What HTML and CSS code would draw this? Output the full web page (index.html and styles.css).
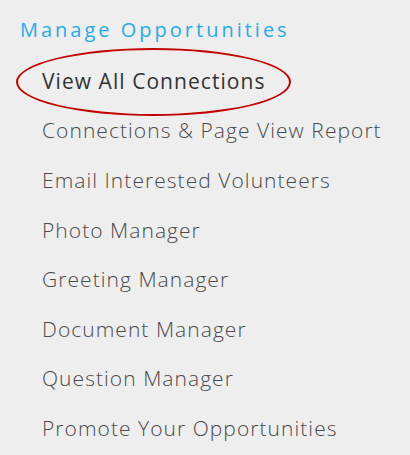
FILE: index.html
```html
<!DOCTYPE html>
<html lang="en">
<head>
  <meta charset="UTF-8">
  <meta name="viewport" content="width=device-width, initial-scale=1.0">
  <title>Manage Opportunities</title>
  <link rel="stylesheet" href="styles.css">
</head>
<body>
  <nav class="manage container">
    <h2 class="section-title">Manage Opportunities</h2>
    <ul class="manage-list">
      <li class="current"><a href="#">View All Connections</a></li>
      <li><a href="#">Connections &amp; Page View Report</a></li>
      <li><a href="#">Email Interested Volunteers</a></li>
      <li><a href="#">Photo Manager</a></li>
      <li><a href="#">Greeting Manager</a></li>
      <li><a href="#">Document Manager</a></li>
      <li><a href="#">Question Manager</a></li>
      <li><a href="#">Promote Your Opportunities</a></li>
    </ul>
  </nav>
</body>
</html>
```

FILE: styles.css
```css
*{
  padding: 0;
  margin: 0;
  box-sizing: border-box;
}
body{
  background-color: #eeeeee;
  font-family: "Open Sans", "Liberation Sans", sans-serif;
}
.container{
  padding: 17px 0 0 20px;
}
.section-title{
  font-size: 20px;
  font-weight: 400;
  line-height: 26px;
  letter-spacing: 3px;
  color: #29abe2;
}
.manage-list{
  list-style: none;
  padding-left: 22px;
  margin-top: 13px;
}
.manage-list li{
  height: 49.6px;
  display: flex;
  align-items: center;
}
.manage-list a{
  text-decoration: none;
  color: #4a4a4a;
  font-size: 21px;
  font-weight: 300;
  letter-spacing: 1.05px;
}
.manage-list .current{
  position: relative;
}
.manage-list .current a{
  color: #333;
  font-weight: 500;
}
.manage-list .current::after{
  content: "";
  position: absolute;
  left: -26px;
  top: -8px;
  width: 271px;
  height: 64px;
  border: 2px solid #c00000;
  border-radius: 50%;
}
```
